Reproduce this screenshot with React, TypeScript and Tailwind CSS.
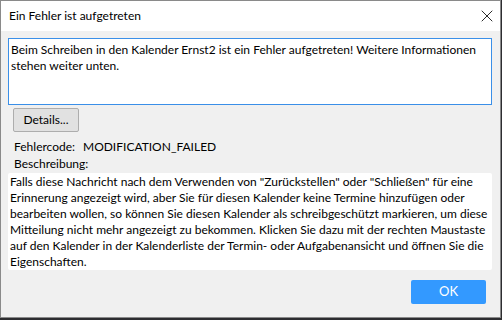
import { X } from 'lucide-react';

export default function App() {
  const font = { fontFamily: 'Lato, "Noto Sans", sans-serif' };
  return (
    <div className="w-[502px] h-[320px] bg-[#2d2d30] overflow-hidden" style={font}>
      <div className="w-[501px] h-[318px] border border-[#8a8a8a] bg-[#f0f0f0] flex flex-col text-[12px] text-black">
        {/* Title bar */}
        <div className="h-[30px] bg-white flex items-center justify-between pl-2 pr-[3px] shrink-0">
          <span className="text-[12px]">Ein Fehler ist aufgetreten</span>
          <X size={20} strokeWidth={1} className="text-black" />
        </div>

        <div className="flex flex-col px-[7px] pt-[7px]">
          <div className="h-[67px] w-[484px] bg-white border border-[#3a8fe8] px-[2px] pt-[3px] leading-[16px]">
            Beim Schreiben in den Kalender Ernst2 ist ein Fehler aufgetreten! Weitere Informationen stehen weiter unten.
          </div>

          <button className="mt-[3px] ml-[5px] w-[66px] h-[24px] bg-[#e1e1e1] border border-[#adadad] rounded-[2px] text-[12px]">
            Details...
          </button>

          <div className="flex mt-[5px] ml-[6px] h-[19px] items-center">
            <span className="w-[69px]">Fehlercode:</span>
            <span>MODIFICATION_FAILED</span>
          </div>
          <div className="ml-[6px] h-[16px] flex items-center">Beschreibung:</div>

          <div className="mt-[1px] w-[484px] h-[97px] bg-white rounded-[2px] px-[2px] pt-[1px] leading-[16px]">
            Falls diese Nachricht nach dem Verwenden von "Zurückstellen" oder "Schließen" für eine Erinnerung angezeigt wird, aber Sie für diesen Kalender keine Termine hinzufügen oder bearbeiten wollen, so können Sie diesen Kalender als schreibgeschützt markieren, um diese Mitteilung nicht mehr angezeigt zu bekommen. Klicken Sie dazu mit der rechten Maustaste auf den Kalender in der Kalenderliste der Termin- oder Aufgabenansicht und öffnen Sie die Eigenschaften.
          </div>

          <div className="flex justify-end mt-[10px] pr-[7px]">
            <button className="w-[75px] h-[24px] bg-[#3399ff] rounded-[2px] text-white text-[13px]">OK</button>
          </div>
        </div>
      </div>
    </div>
  );
}
